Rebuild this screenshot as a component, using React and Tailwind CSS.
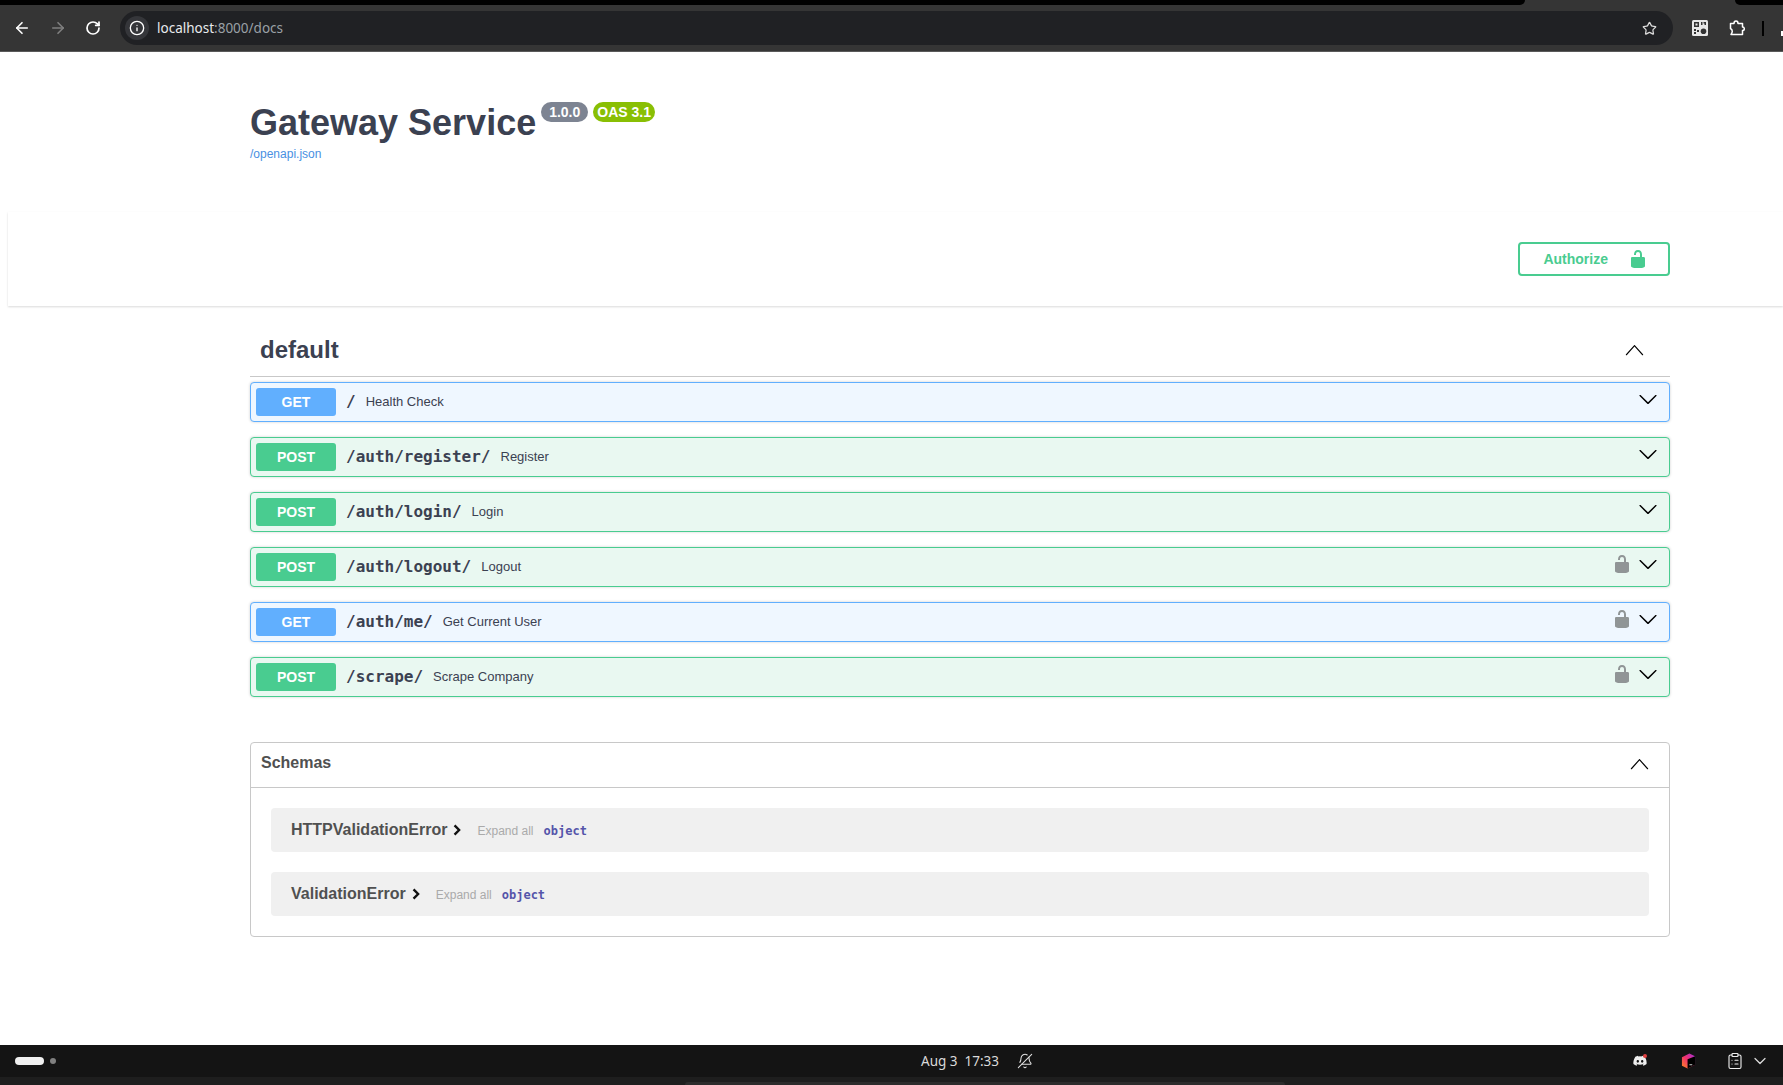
import React from "react";
import { ArrowLeft, ArrowRight, RotateCw, Info, Star, ClipboardList, ChevronDown, BellOff } from "lucide-react";

const Lock = ({ cls }) => (
  <svg viewBox="0 0 20 20" className={cls} fill="currentColor">
    <path d="M15.8 8H14V5.6C14 2.703 12.665 1 10 1 7.334 1 6 2.703 6 5.6V6h2v-.801C8 3.754 8.797 3 10 3c1.203 0 2 .754 2 2.199V8H4c-.553 0-1 .646-1 1.199V17c0 .549.428 1.139.951 1.307l1.197.387C5.672 18.861 6.55 19 7.1 19h5.8c.549 0 1.428-.139 1.951-.307l1.196-.387c.524-.167.953-.757.953-1.306V9.199C17 8.646 16.352 8 15.8 8z" />
  </svg>
);

const Caret = ({ up }) => (
  <svg viewBox="0 0 20 20" className={up ? "w-[23px] h-[23px] text-black" : "w-5 h-5 text-black"} fill="currentColor">
    {up ? (
      <path d="M17.418 14.908c-.189.211-.498.211-.688 0L10 7.44l-6.73 7.468c-.19.211-.499.211-.688 0s-.19-.554 0-.765l7.074-7.85c.19-.211.498-.211.688 0l7.074 7.85c.19.211.19.554 0 .765z" />
    ) : (
      <path d="M17.418 6.109c.272-.268.709-.268.979 0s.271.701 0 .969l-7.908 7.83c-.27.268-.707.268-.979 0l-7.908-7.83c-.27-.268-.27-.701 0-.969.271-.268.709-.268.979 0L10 13.25l7.418-7.141z" />
    )}
  </svg>
);

const ops = [
  { m: "GET", p: "/", d: "Health Check" },
  { m: "POST", p: "/auth/register/", d: "Register" },
  { m: "POST", p: "/auth/login/", d: "Login" },
  { m: "POST", p: "/auth/logout/", d: "Logout", lock: true },
  { m: "GET", p: "/auth/me/", d: "Get Current User", lock: true },
  { m: "POST", p: "/scrape/", d: "Scrape Company", lock: true },
];

function Op({ m, p, d, lock }) {
  const get = m === "GET";
  return (
    <div className={`h-10 mb-[15px] flex items-center rounded border pl-[5px] pr-[11px] shadow-[0_0_3px_rgba(0,0,0,0.19)] ${get ? "bg-[#eff7ff] border-[#61affe]" : "bg-[#e9f8f1] border-[#49cc90]"}`}>
      <span className={`w-20 h-7 flex items-center justify-center rounded-[3px] text-white text-sm font-bold ${get ? "bg-[#61affe]" : "bg-[#49cc90]"}`}>{m}</span>
      <span className="ml-[10px] text-base font-semibold text-[#3b4151] font-['DejaVu_Sans_Mono','Liberation_Mono',monospace]">{p}</span>
      <span className="ml-[10px] text-[13px] text-[#3b4151]">{d}</span>
      <span className="ml-auto flex items-center -mt-[6px]">
        {lock && <span className="text-[#909596]"><Lock cls="w-5 h-5" /></span>}
        <span className="ml-[6px]"><Caret /></span>
      </span>
    </div>
  );
}

function Model({ name, last }) {
  return (
    <div className={`h-11 ${last ? "" : "mb-5"} flex items-center rounded bg-[#f0f0f0] pl-5`}>
      <span className="text-base font-bold text-[#505050]">{name}</span>
      <svg viewBox="0 0 20 20" className="ml-[3px] w-[14px] h-[14px] text-[#111]" fill="none" stroke="currentColor" strokeWidth="3.4"><path d="M6.5 3.5 13 10l-6.500 6.500" /></svg>
      <span className="ml-[13px] mt-[2px] text-xs text-[#aaa]">Expand all</span>
      <span className="ml-[10px] mt-[2px] text-xs font-semibold text-[#55a] font-['DejaVu_Sans_Mono',monospace]">object</span>
    </div>
  );
}

export default function App() {
  return (
    <div className="h-[1085px] w-[1783px] overflow-hidden flex flex-col bg-white font-['Liberation_Sans',Arial,sans-serif]">
      <header className="relative h-[52px] shrink-0 bg-[#353535] border-b border-[#5a5a5a]">
        <div className="absolute top-0 left-0 h-[5px] w-[1525px] bg-black rounded-br-[10px]" />
        <div className="absolute top-0 right-0 h-[5px] w-[48px] bg-black rounded-bl-[10px]" />
        <div className="flex items-center h-full pt-[5px]">
          <ArrowLeft className="ml-[13px] w-[18px] h-[18px] text-white" strokeWidth={2.2} />
          <ArrowRight className="ml-[18px] w-[18px] h-[18px] text-[#7f7f7f]" strokeWidth={2.2} />
          <RotateCw className="ml-[18px] w-[16px] h-[16px] text-white" strokeWidth={2.6} />
          <div className="ml-[19px] w-[1553px] h-[34px] rounded-full bg-[#202124] flex items-center pl-[5px] pr-[16px]">
            <span className="w-6 h-6 rounded-full bg-[#35363a] flex items-center justify-center"><Info className="w-4 h-4 text-white" /></span>
            <span className="ml-2 text-[13.5px] font-['Noto_Sans','Lato',sans-serif] text-[#e8eaed]">localhost<span className="text-[#9aa0a6]">:8000/docs</span></span>
            <Star className="ml-auto w-[15px] h-[15px] text-[#dcdcdc]" strokeWidth={2} />
          </div>
          <svg viewBox="0 0 16 16" className="ml-[19px] w-4 h-4">
            <rect width="16" height="16" rx="1.500" fill="#e8e8e8" />
            <path d="M2 2h5v5H2zM9 2h1.500v3H9zM11.500 2H14v3h-1.500v-1.500h-1zM2 9h2v2H2zM5 10h2v2H5zM2 12h2v2H2z" fill="#333" />
            <path d="M3.500 3.500h2v2h-2z" fill="#e8e8e8" />
            <circle cx="11.500" cy="11.300" r="2.800" fill="#333" />
          </svg>
          <svg viewBox="0 0 16 16" className="ml-[21px] w-4 h-4" fill="none" stroke="#fff" strokeWidth="1.500" strokeLinejoin="round">
            <path d="M1.500 3.500h3.500c0-1.500.7-2.500 2-2.500s2 1 2 2.500h4.500v3.500c1 0 1.800.6 1.800 1.800s-.8 1.800-1.800 1.800v3.900h-11.500c.8-1 1.300-2 1.300-3.200s-.8-2.300-1.800-2.800z" />
          </svg>
          <span className="ml-[17px] w-[2px] h-[15px] bg-black" />
          <span className="ml-[17px] mt-[10px] w-[2px] h-[5px] bg-white" />
        </div>
      </header>

      <main className="flex-1 relative">
        <div className="w-[1420px] ml-[250px] pt-[50px] h-[160px]">
          <div className="flex items-start">
            <h1 className="text-4xl leading-[42px] font-bold text-[#3b4151]">Gateway Service</h1>
            <span className="ml-[5px] h-5 w-[47px] text-center rounded-full bg-[#7d8492] text-white text-sm font-bold leading-5">1.0.0</span>
            <span className="ml-[5px] h-5 w-[62px] text-center rounded-full bg-[#89bf04] text-white text-sm font-bold leading-5">OAS 3.1</span>
          </div>
          <a className="block mt-[2px] text-xs text-[#4990e2]">/openapi.json</a>
        </div>

        <div className="ml-2 h-[94px] bg-white shadow-[0_1px_2px_rgba(0,0,0,0.15)] flex items-center justify-end pr-[113px]">
          <button className="w-[152px] h-[34px] rounded border-2 border-[#49cc90] text-[#49cc90] text-sm font-bold flex items-center justify-end pr-[20px]">
            <span className="mr-[20px]">Authorize</span>
            <Lock cls="w-5 h-5" />
          </button>
        </div>

        <div className="w-[1420px] ml-[250px]">
          <div className="h-[71px] flex items-center justify-between border-b border-[#c8c8c8] pl-[10px] pr-[24px] pt-[18px]">
            <span className="text-2xl font-bold text-[#3b4151]">default</span>
            <span className="-mt-[1px]"><Caret up /></span>
          </div>
          <div className="pt-[5px]">
            {ops.map((o) => <Op key={o.p} {...o} />)}
          </div>

          <div className="mt-[45px] border border-[#c8c8c8] rounded">
            <div className="h-[45px] flex items-center justify-between border-b border-[#c8c8c8] pl-[10px] pr-[18px]">
              <span className="text-base font-bold text-[#505050] -mt-1">Schemas</span>
              <span className="-mt-[3px]"><Caret up /></span>
            </div>
            <div className="px-5 py-5">
              <Model name="HTTPValidationError" />
              <Model name="ValidationError" last />
            </div>
          </div>
        </div>
      </main>

      <footer className="relative h-10 shrink-0 bg-[#1e1e1e]">
        <div className="h-8 bg-[#141414] flex items-center relative">
          <span className="ml-[15px] w-[29px] h-2 rounded-full bg-[#f0f0f0]" />
          <span className="ml-[6px] w-[6px] h-[6px] rounded-full bg-[#808080]" />
          <span className="absolute left-[921px] text-[13.5px] font-['Noto_Sans','Open_Sans',sans-serif] text-[#dadada] whitespace-pre">Aug 3  17:33</span>
          <BellOff className="absolute left-[1017px] w-4 h-4 text-[#e0e0e0] -scale-x-100" strokeWidth={1.6} />
          <svg viewBox="0 0 24 24" className="absolute left-[1632px] w-4 h-4" fill="#eee"><path d="M19 5.500A16 16 0 0 0 15 4l-.6 1.200a15 15 0 0 0-4.800 0L9 4a16 16 0 0 0-4 1.500C2.500 9.300 1.800 13 2.100 16.600A16 16 0 0 0 7 19l1-1.700-1.700-.9.400-.3a11.500 11.500 0 0 0 10.600 0l.4.300-1.700.9 1 1.700a16 16 0 0 0 4.900-2.400C22.300 12.500 21.300 8.800 19 5.500zM8.700 14.500c-1 0-1.800-.9-1.800-2s.8-2 1.800-2 1.800.9 1.800 2-.8 2-1.800 2zm6.600 0c-1 0-1.800-.9-1.800-2s.8-2 1.800-2 1.800.9 1.800 2-.8 2-1.800 2z" /></svg>
          <span className="absolute left-[1643px] top-[9px] w-[4px] h-[4px] rounded-full bg-[#e04040]" />
          <svg viewBox="0 0 16 16" className="absolute left-[1681px] w-[15px] h-[16px]"><defs><linearGradient id="jb" x1="0" y1="1" x2="1" y2="0"><stop offset="0" stopColor="#ff8a1e" /><stop offset="0.500" stopColor="#f0306e" /><stop offset="1" stopColor="#a030e0" /></linearGradient></defs><path d="M1 4 9 0l6 3v9l-8 4-6-3z" fill="url(#jb)" /><path d="M7 6l8-3v9l-8 4z" fill="#000" /><path d="M9 12h3" stroke="#ddd" strokeWidth="1" /></svg>
          <ClipboardList className="absolute left-[1726px] w-[18px] h-[18px] text-[#eee]" strokeWidth={1.5} />
          <ChevronDown className="absolute left-[1750px] w-5 h-5 text-[#dadada]" strokeWidth={1.5} />
        </div>
        <div className="absolute left-[685px] bottom-0 w-[600px] h-[3px] bg-[#2c2c2c] rounded-t-[3px]" />
      </footer>
    </div>
  );
}
